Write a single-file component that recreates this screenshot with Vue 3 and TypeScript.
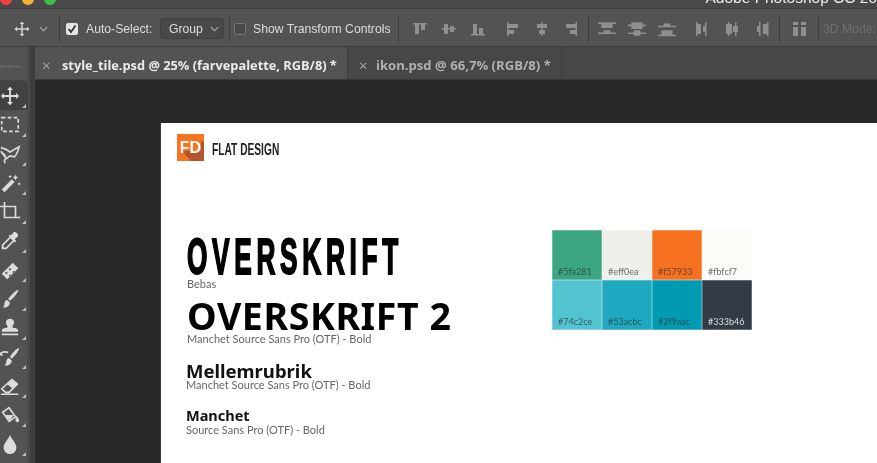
<script setup lang="ts">
interface Tool {
  name: string;
  fill?: string;
  stroke?: string;
  dash?: boolean;
}

interface Swatch {
  color: string;
  label: string;
  onDark?: boolean;
}

const moveArrows =
  'M12 2l3.2 3.4h-2.2V11h5.6V8.8L22 12l-3.4 3.2V13H13v5.6h2.2L12 22l-3.2-3.4H11V13H5.4v2.2L2 12l3.4-3.2V11H11V5.4H8.8z';

const tools: Tool[] = [
  { name: 'move', fill: moveArrows },
  { name: 'marquee', stroke: 'M3 4h18v15H3z', dash: true },
  { name: 'lasso', stroke: 'M2 5c4 1 8 3 10 5 3-2 6-4 10-6-1 4-2 8-5 11l-5-1-4 3-6-8 5 5M8 17c-2 1-3 3-1 5' },
  {
    name: 'wand',
    fill: 'M3 19L14 8l3 3L6 22zM18 3l1 2 2 1-2 1-1 2-1-2-2-1 2-1zM22 11l.6 1.4L24 13l-1.4.6L22 15l-.6-1.4L20 13l1.4-.6zM12 3l.6 1.4L14 5l-1.4.6L12 7l-.6-1.4L10 5l1.4-.6z',
  },
  { name: 'crop', stroke: 'M6 1v17h15M1 6h17v12', fill: 'M21 17h2v2h-2z' },
  { name: 'eyedropper', fill: 'M15 8l4 4-1.5 1.5-1-1L8 21H3v-5l8.5-8.5-1-1L12 5l1 1 3-3.5c2-1.5 6 2 4.5 4.5L17 10zM12.500 9L5 16.500V19h2.500L15 11.500z' },
  { name: 'heal', fill: 'M3 16L15 4l6 6-12 12zM8 14a1.200 1.200 0 1 0 .1 0zM12 10a1.200 1.200 0 1 0 .1 0zM12 17a1.200 1.200 0 1 0 .1 0zM16 13a1.200 1.200 0 1 0 .1 0z' },
  { name: 'brush', fill: 'M21 2c.5 2-4 8-9 12l-2-2C14 7 19 2 21 2zM9 13l3 3c-.500 4-4 6-8 5 2-1 2-3 2-4 0-2 1-4 3-4z' },
  { name: 'stamp', fill: 'M12 2c3 0 4.500 2 4.500 4 0 2.500-2 3-2 5 0 1 3.500 1 5.500 2 .8.400 1 2 1 3H3c0-1 .2-2.600 1-3 2-1 5.500-1 5.500-2 0-2-2-2.500-2-5 0-2 1.500-4 4.500-4zM3 18h18v2H3z' },
  { name: 'history', fill: 'M22 2c0 3-4 8-8 12l-2-2c3-5 7-9 10-10zM11 13l3 3c-.500 3-3 6-8 5 2-1 2-3 2-4 0-2 1-4 3-4z', stroke: 'M1 9c2-3 5-3 9-2M1 9l3 1' },
  { name: 'eraser', stroke: 'M3 15L14 5l6 5-9 9H7zM2 21h19', fill: 'M14 5l6 5-5 5-6-5z' },
  { name: 'bucket', stroke: 'M4 9l7-5 7 10-7 5z', fill: 'M6 12h10l-4 6zM19 13c2 2 3 3 3 5a2 2 0 0 1-4 0c0-2 0-3 1-5z' },
  { name: 'drop', fill: 'M12 2c1 4 7 9 7 14a7 7 0 0 1-14 0c0-5 6-10 7-14z' },
];

// align buttons, grouped the same way Photoshop groups them
const alignGroups: string[][] = [
  [
    'M1 2h14v1.500H1zM3 3h4v10H3zM9 3h4v6H9z',
    'M1 7h14v1.500H1zM3 3h4v10H3zM9 5h4v6H9z',
    'M1 13h14v1.500H1zM3 3h4v10H3zM9 7h4v6H9z',
  ],
  [
    'M2 1h1.500v14H2zM3 3h10v4H3zM3 9h6v4H3z',
    'M7.200 1h1.500v14H7.200zM3 3h10v4H3zM5 9h6v4H5z',
    'M12.500 1H14v14h-1.500zM3 3h10v4H3zM7 9h6v4H7z',
  ],
  [
    'M0 2h16v1.500H0zM3 3h10v4H3zM0 11h16v1.500H0zM5 9h6v2H5z',
    'M0 4h16v1.500H0zM3 2h10v6H3zM0 11h16v1.500H0zM5 9h6v5H5z',
    'M0 13h16v1.500H0zM3 9h10v4H3zM0 5h16v1.500H0zM5 3h6v2H5z',
  ],
  [
    'M2 1h1.500v14H2zM3 3h4v10H3zM11 1h1.500v14H11zM9 5h2v6H9z',
    'M4 1h1.500v14H4zM2 3h6v10H2zM11 1h1.500v14H11zM9 5h5v6H9z',
    'M13 1h1.500v14H13zM9 3h4v10H9zM5 1h1.500v14H5zM3 5h2v6H3z',
  ],
];

const swatches: Swatch[] = [
  { color: '#3ca582', label: '#5fa281' },
  { color: '#eff0ea', label: '#eff0ea' },
  { color: '#f57120', label: '#f57933' },
  { color: '#fbfcf7', label: '#fbfcf7' },
  { color: '#53c3d0', label: '#74c2ce' },
  { color: '#1fa9c0', label: '#53acbc' },
  { color: '#009bb2', label: '#2f9aac' },
  { color: '#333b46', label: '#333b46', onDark: true },
];
</script>

<template>
  <div class="app">
    <header class="titlebar">
      <div class="lights">
        <span class="light red"></span>
        <span class="light yellow"></span>
        <span class="light green"></span>
      </div>
      <span class="app-title">Adobe Photoshop CC 20</span>
    </header>

    <div class="options">
      <svg class="opt-move" viewBox="0 0 24 24" width="18" height="18"><path :d="moveArrows" fill="#d6d6d6" /></svg>
      <svg class="chevron chevron-move" viewBox="0 0 10 6" width="9" height="6"><path d="M1 1l4 4 4-4" /></svg>
      <i class="sep sep-a"></i>
      <span class="check checked">
        <svg viewBox="0 0 12 12" width="12" height="12"><path d="M2.500 6l2.500 3 4.500-6.500" /></svg>
      </span>
      <span class="opt-label auto">Auto-Select:</span>
      <div class="select">
        <span>Group</span>
        <svg class="chevron" viewBox="0 0 10 6" width="9" height="6"><path d="M1 1l4 4 4-4" /></svg>
      </div>
      <i class="sep sep-b"></i>
      <span class="check"></span>
      <span class="opt-label transform">Show Transform Controls</span>
      <i class="sep sep-c"></i>
      <div class="align-group group-1">
        <svg v-for="d in alignGroups[0]" :key="d" viewBox="0 0 16 16" width="16" height="16"><path :d="d" /></svg>
      </div>
      <div class="align-group group-2">
        <svg v-for="d in alignGroups[1]" :key="d" viewBox="0 0 16 16" width="16" height="16"><path :d="d" /></svg>
      </div>
      <i class="sep sep-d"></i>
      <div class="align-group group-3">
        <svg v-for="d in alignGroups[2]" :key="d" viewBox="0 0 16 16" width="18" height="18"><path :d="d" /></svg>
      </div>
      <div class="align-group group-4">
        <svg v-for="d in alignGroups[3]" :key="d" viewBox="0 0 16 16" width="16" height="16"><path :d="d" /></svg>
      </div>
      <i class="sep sep-e"></i>
      <svg class="auto-align" viewBox="0 0 16 16" width="16" height="16"><path d="M1 1h5v3H1zM1 6h5v9H1zM9 1h5v3H9zM9 6h5v9H9z" /></svg>
      <i class="sep sep-f"></i>
      <span class="mode">3D Mode:</span>
    </div>

    <div class="workspace">
      <aside class="toolbar">
        <div class="grip"></div>
        <div class="tools">
          <div v-for="tool in tools" :key="tool.name" class="tool" :class="{ active: tool.name === 'move' }">
            <svg viewBox="0 0 24 24" width="22" height="22">
              <path v-if="tool.fill" :d="tool.fill" fill="#dcdcdc" />
              <path
                v-if="tool.stroke"
                :d="tool.stroke"
                fill="none"
                stroke="#dcdcdc"
                stroke-width="1.800"
                :stroke-dasharray="tool.dash ? '4 2.500' : undefined"
              />
            </svg>
          </div>
        </div>
      </aside>

      <main class="main">
        <nav class="tabs">
          <div class="tab tab-active">
            <span class="tab-x">×</span>
            <span class="tab-name">style_tile.psd @ 25% (farvepalette, RGB/8) *</span>
          </div>
          <div class="tab tab-other">
            <span class="tab-x">×</span>
            <span class="tab-name">ikon.psd @ 66,7% (RGB/8) *</span>
          </div>
        </nav>

        <section class="canvas">
          <article class="doc">
            <div class="brand">
              <div class="logo">
                <svg viewBox="0 0 27 27" width="27" height="27"><path d="M5 17h19V6l3 3v18H14z" fill="#b4532a" /></svg>
                <span>FD</span>
              </div>
              <div class="brand-name">FLAT DESIGN</div>
            </div>

            <div class="content">
              <div class="type">
                <h1 class="bebas">OVERSKRIFT</h1>
                <p class="cap cap-bebas">Bebas</p>
                <h2 class="h2">OVERSKRIFT 2</h2>
                <p class="cap cap-h2">Manchet Source Sans Pro (OTF) - Bold</p>
                <h3 class="h3">Mellemrubrik</h3>
                <p class="cap cap-h3">Manchet Source Sans Pro (OTF) - Bold</p>
                <h4 class="h4">Manchet</h4>
                <p class="cap cap-h4">Source Sans Pro (OTF) - Bold</p>
              </div>

              <div class="palette">
                <div
                  v-for="s in swatches"
                  :key="s.label"
                  class="swatch"
                  :class="{ 'on-dark': s.onDark }"
                  :style="{ background: s.color }"
                >
                  {{ s.label }}
                </div>
              </div>
            </div>
          </article>
        </section>
      </main>
    </div>
  </div>
</template>

<style>
html,
body {
  margin: 0;
  background: #282828;
}
</style>

<style scoped>
.app {
  width: 877px;
  height: 463px;
  overflow: hidden;
  display: flex;
  flex-direction: column;
  background: #535353;
  font-family: "Liberation Sans", Arial, sans-serif;
  filter: blur(0.45px);
}

.titlebar {
  height: 9px;
  flex: none;
  box-sizing: border-box;
  display: flex;
  justify-content: space-between;
  align-items: flex-end;
  background: #494949;
  overflow: hidden;
  border-bottom: 1px solid #3e3e3e;
}

.lights {
  display: flex;
  gap: 10px;
  margin: 0 0 3px 0;
}

.light {
  width: 12px;
  height: 12px;
  border-radius: 50%;
  flex: none;
}

.red { background: #f2413d; }
.yellow { background: #f5b23a; }
.green { background: #3fbe4a; }

.app-title {
  color: #eee;
  font-size: 15.500px;
  line-height: 15px;
  margin: 0 0 3px 0;
  white-space: nowrap;
}

.options {
  height: 38px;
  flex: none;
  box-sizing: border-box;
  padding-top: 2px;
  display: flex;
  align-items: center;
  border-bottom: 1px solid #3e3e3e;
  color: #dedede;
  font-size: 12.200px;
}

.options svg { flex: none; }

.opt-move { margin-left: 13px; }

.chevron {
  fill: none;
  stroke: #b4b4b4;
  stroke-width: 1.200;
}

.chevron-move { margin-left: 8px; }

.sep {
  flex: none;
  width: 1px;
  height: 26px;
  background: #3d3d3d;
}

.sep-a { margin: 0 6px 0 11px; }
.sep-b { margin: 0 4px 0 5px; }
.sep-c { margin: 0 13px 0 7px; }
.sep-d { margin: 0 9px 0 9px; }
.sep-e { margin: 0 12px 0 9px; }
.sep-f { margin: 0 4px 0 10px; }

.check {
  flex: none;
  box-sizing: border-box;
  width: 12px;
  height: 12px;
  border-radius: 2px;
  border: 1px solid #757575;
  background: #4a4a4a;
}

.check.checked {
  background: #e4e4e4;
  border-color: #e4e4e4;
  display: flex;
  align-items: center;
  justify-content: center;
}

.check svg {
  fill: none;
  stroke: #333;
  stroke-width: 1.800;
}

.opt-label {
  flex: none;
  white-space: nowrap;
  margin-left: 7px;
}

.auto {
  width: 67px;
  margin-left: 8px;
  margin-right: 7px;
}

.transform { width: 138px; }

.select {
  flex: none;
  box-sizing: border-box;
  width: 64px;
  height: 21px;
  padding: 0 4px 0 8px;
  display: flex;
  align-items: center;
  justify-content: space-between;
  background: #494949;
  border: 1px solid #414141;
  border-radius: 3px;
}

.align-group {
  display: flex;
  align-items: center;
  flex: none;
}

.align-group svg,
.auto-align {
  fill: #8f8f8f;
}

.group-1,
.group-2 { gap: 13px; }

.group-2 { margin-left: 19px; }

.group-3 { gap: 12px; }

.group-4 {
  gap: 14px;
  margin-left: 18px;
}

.mode {
  flex: none;
  color: #707070;
  font-size: 12.200px;
  white-space: nowrap;
}

.workspace {
  flex: 1;
  min-height: 0;
  display: flex;
}

.toolbar {
  flex: none;
  box-sizing: border-box;
  width: 35px;
  background: #535353;
  border-right: 5px solid #3e3e3e;
  box-shadow: inset -3px 0 0 #4b4b4b;
}

.grip {
  height: 34px;
  box-sizing: border-box;
  border-bottom: 1px solid #474747;
  margin: 0 5px 0 0;
  background: repeating-linear-gradient(90deg, #6a6a6a 0 1px, transparent 1px 2px) 0 18px / 22px 3px no-repeat;
}

.tools {
  display: flex;
  flex-direction: column;
}

.tool {
  position: relative;
  width: 28px;
  height: 29px;
  flex: none;
  display: flex;
  align-items: center;
  box-sizing: border-box;
}

.tool svg { margin-left: -1px; }

.tool.active {
  background: #424242;
  border-radius: 0 3px 3px 0;
}

.tool::after {
  content: "";
  position: absolute;
  left: 22px;
  bottom: 2px;
  border-left: 4px solid transparent;
  border-bottom: 4px solid #bdbdbd;
}

.main {
  flex: 1;
  min-width: 0;
  display: flex;
  flex-direction: column;
}

.tabs {
  height: 33px;
  flex: none;
  box-sizing: border-box;
  display: flex;
  background: #474747;
  border-bottom: 1px solid #3a3a3a;
}

.tab {
  box-sizing: border-box;
  padding-top: 4px;
  display: flex;
  align-items: center;
  font-family: "Open Sans", sans-serif;
  font-weight: 700;
  font-size: 12.800px;
  white-space: nowrap;
  border-right: 1px solid #3d3d3d;
}

.tab-active {
  width: 313px;
  background: #535353;
  color: #ebebeb;
}

.tab-other {
  width: 214px;
  padding-left: 1px;
  color: #b0b0b0;
  font-size: 13.100px;
}

.tab-x {
  width: 27px;
  padding-left: 7px;
  box-sizing: border-box;
  font-weight: 400;
  font-size: 15px;
  color: #a8a8a8;
}

.tab-other .tab-x { padding-left: 10px; }

.canvas {
  flex: 1;
  min-height: 0;
  box-sizing: border-box;
  padding: 43px 0 0 126px;
  background: #282828;
}

.doc {
  height: 100%;
  box-sizing: border-box;
  padding: 11px 0 0 16px;
  background: #fff;
  border-left: 1px solid #3a3a3a;
  margin-left: -1px;
}

.brand {
  display: flex;
  align-items: center;
  gap: 8px;
  height: 27px;
}

.logo {
  position: relative;
  width: 27px;
  height: 27px;
  background: #f47421;
  color: #fff;
  font-weight: 700;
  font-size: 16px;
  line-height: 27px;
  text-align: center;
  overflow: hidden;
}

.logo svg {
  position: absolute;
  left: 0;
  top: 0;
}

.logo span { position: relative; }

.brand-name {
  width: 68px;
  font-size: 17px;
  font-weight: 700;
  line-height: 17px;
  margin-top: 3px;
  white-space: nowrap;
  color: #222;
  transform: scaleX(0.6);
  transform-origin: left center;
}

.content {
  display: flex;
  margin-top: 69px;
}

.type {
  width: 365px;
  margin-left: 9px;
  flex: none;
}

h1,
h2,
h3,
h4,
p {
  margin: 0;
  white-space: nowrap;
}

.bebas {
  height: 48px;
  margin-left: 1px;
  font-size: 50px;
  line-height: 54px;
  font-weight: 700;
  color: #000;
  letter-spacing: 9px;
  -webkit-text-stroke: 2px #000;
  transform: scaleX(0.524);
  transform-origin: left center;
}

.cap {
  font-family: "Lato", sans-serif;
  font-size: 11px;
  line-height: 12px;
  color: #666;
}

.cap-bebas { margin-left: 1px; }

.h2 {
  margin: 6px 0 0 1px;
  font-family: "Noto Sans", sans-serif;
  font-size: 37.500px;
  line-height: 40px;
  font-weight: 700;
  letter-spacing: 0.600px;
  color: #000;
}

.cap-h2 {
  margin: -3px 0 0 1px;
}

.h3 {
  margin-top: 16px;
  font-family: "Noto Sans", sans-serif;
  font-size: 18.500px;
  line-height: 20px;
  font-weight: 700;
  color: #111;
}

.cap-h3 { margin-top: -2px; }

.h4 {
  margin-top: 15px;
  font-family: "Noto Sans", sans-serif;
  font-size: 14.500px;
  line-height: 18px;
  font-weight: 700;
  color: #111;
}

.palette {
  flex: none;
  width: 200px;
  margin-left: 1px;
  display: grid;
  grid-template-columns: repeat(4, 50px);
  grid-auto-rows: 50px;
  align-self: flex-start;
}

.swatch {
  box-sizing: border-box;
  padding: 0 0 3px 6px;
  display: flex;
  align-items: flex-end;
  font-family: "Lato", sans-serif;
  font-size: 9px;
  line-height: 11px;
  color: rgba(40, 50, 50, 0.7);
  box-shadow: inset 0 0 0 0.500px rgba(255, 255, 255, 0.5);
}

.swatch.on-dark { color: #ddd; }
</style>
